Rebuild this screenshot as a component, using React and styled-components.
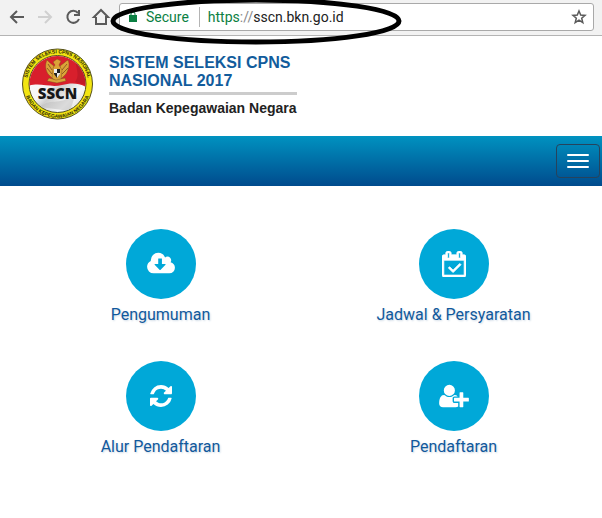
import React from "react";
import styled, { createGlobalStyle } from "styled-components";

const GlobalStyle = createGlobalStyle`
  *, *::before, *::after { box-sizing: border-box; }
  body { margin: 0; background: #fff; font-family: Roboto, sans-serif; }
`;

const Toolbar = styled.div`
  position: relative;
  display: flex;
  align-items: center;
  height: 36px;
  padding: 0 8px 2px 3px;
  background: #f2f2f2;
  border-bottom: 1px solid #b4b4b4;
`;

const ToolButton = styled.button`
  display: flex;
  align-items: center;
  justify-content: center;
  width: 28px;
  height: 28px;
  padding: 0;
  border: 0;
  background: none;
  color: ${(p) => (p.disabled ? "#d0d0d0" : "#5a5a5a")};
`;

const AddressBar = styled.div`
  display: flex;
  flex: 1;
  align-items: center;
  height: 28px;
  margin-left: 4px;
  padding-left: 8px;
  background: #fff;
  border: 1px solid #a9a9a9;
  border-radius: 3px;
  color: #0b8043;
  font-size: 14px;
  line-height: 20px;
`;

const Secure = styled.span`
  margin-left: 8px;
  padding-right: 10px;
`;

const Url = styled.div`
  flex: 1;
  padding-left: 8px;
  border-left: 1px solid #b4b4b4;
`;

const Slashes = styled.span`
  color: #888;
`;

const Host = styled.span`
  color: #222;
`;

const Marker = styled.svg`
  position: absolute;
  z-index: 1;
  top: -5px;
  left: 108px;
  pointer-events: none;
`;

const Brand = styled.header`
  display: flex;
  align-items: flex-start;
  height: 100px;
  padding: 11px 20px 0;
  gap: 14px;
`;

const BrandText = styled.div`
  padding-top: 7px;
  font-family: "Liberation Sans", Arial, sans-serif;
`;

const Title = styled.h1`
  margin: 0;
  padding-bottom: 2px;
  border-bottom: 3px solid #ccc;
  color: #125c9c;
  font-size: 16px;
  line-height: 18px;
`;

const Agency = styled.p`
  margin: 0;
  padding-top: 4px;
  color: #222;
  font-size: 14px;
  font-weight: bold;
  line-height: 18px;
`;

const NavBar = styled.nav`
  display: flex;
  align-items: center;
  justify-content: flex-end;
  height: 50px;
  padding-right: 2px;
  background: linear-gradient(#0092c0, #004b8d);
`;

const MenuButton = styled.button`
  display: flex;
  flex-direction: column;
  align-items: center;
  justify-content: center;
  gap: 4px;
  width: 44px;
  height: 34px;
  padding: 0;
  border: 1px solid #26435c;
  border-radius: 4px;
  background: none;
`;

const MenuLine = styled.span`
  width: 22px;
  height: 2px;
  border-radius: 1px;
  background: #fff;
`;

const Menu = styled.main`
  display: grid;
  grid-template-columns: 1fr 1fr;
  row-gap: 36px;
  padding: 43px 2px 0 14px;
`;

const MenuLink = styled.a`
  display: flex;
  flex-direction: column;
  align-items: center;
  gap: 4px;
  color: #11599c;
  font-size: 16px;
  line-height: 22px;
  text-decoration: none;
  text-shadow: 1px 1px 2px #ccd8e4;
`;

const Label = styled.span`
  padding-top: 1px;
  line-height: 21px;
`;

const Circle = styled.span`
  display: flex;
  align-items: center;
  justify-content: center;
  width: 70px;
  height: 70px;
  border-radius: 50%;
  background: #00a8d8;
  color: #fff;
`;

const items = [
  {
    label: "Pengumuman",
    width: 1920,
    path: "M1280 928q0-14-9-23t-23-9h-224v-352q0-13-9.5-22.5t-22.5-9.5h-192q-13 0-22.5 9.5t-9.5 22.5v352h-224q-13 0-22.5 9.5t-9.5 22.5q0 14 9 23l352 352q9 9 23 9t23-9l351-351q10-12 10-24zm640 224q0 159-112.5 271.5t-271.5 112.5h-1088q-185 0-316.5-131.5t-131.5-316.5q0-130 70-240t188-165q-2-30-2-43 0-212 150-362t362-150q156 0 285.5 87t188.5 231q71-62 166-62 106 0 181 75t75 181q0 76-41 138 130 31 213.5 135.5t83.5 238.5z",
  },
  {
    label: "Jadwal & Persyaratan",
    width: 1664,
    path: "M1303 964l-512 512q-10 9-23 9t-23-9l-288-288q-9-10-9-23t9-22l46-46q9-9 22-9t23 9l220 220 444-444q10-9 23-9t22 9l46 46q9 9 9 22t-9 23zm-1175 700h1408v-1024h-1408v1024zm384-1216v-288q0-14-9-23t-23-9h-64q-14 0-23 9t-9 23v288q0 14 9 23t23 9h64q14 0 23-9t9-23zm768 0v-288q0-14-9-23t-23-9h-64q-14 0-23 9t-9 23v288q0 14 9 23t23 9h64q14 0 23-9t9-23zm384-64v1280q0 52-38 90t-90 38h-1408q-52 0-90-38t-38-90v-1280q0-52 38-90t90-38h128v-96q0-66 47-113t113-47h64q66 0 113 47t47 113v96h384v-96q0-66 47-113t113-47h64q66 0 113 47t47 113v96h128q52 0 90 38t38 90z",
    outline: true,
  },
  {
    label: "Alur Pendaftaran",
    width: 1536,
    path: "M1511 1056q0 5-1 7-64 268-268 434.5t-478 166.5q-146 0-282.5-55t-243.5-157l-129 129q-19 19-45 19t-45-19-19-45v-448q0-26 19-45t45-19h448q26 0 45 19t19 45-19 45l-137 137q71 66 161 102t187 36q134 0 250-65t186-179q11-17 53-117 8-23 30-23h192q13 0 22.5 9.5t9.5 22.5zm25-800v448q0 26-19 45t-45 19h-448q-26 0-45-19t-19-45 19-45l138-138q-148-137-349-137-134 0-250 65t-186 179q-11 17-53 117-8 23-30 23h-199q-13 0-22.5-9.5t-9.5-22.5v-7q65-268 270-434.5t480-166.5q146 0 284 55.5t245 156.5l130-129q19-19 45-19t45 19 19 45z",
  },
  {
    label: "Pendaftaran",
    width: 2048,
    path: "M704 896q-159 0-271.5-112.5t-112.5-271.5 112.5-271.5 271.5-112.5 271.5 112.5 112.5 271.5-112.5 271.5-271.5 112.5zm960 128h352q13 0 22.5 9.5t9.5 22.5v192q0 13-9.5 22.5t-22.5 9.5h-352v352q0 13-9.5 22.5t-22.5 9.5h-192q-13 0-22.5-9.5t-9.5-22.5v-352h-352q-13 0-22.5-9.5t-9.5-22.5v-192q0-13 9.5-22.5t22.5-9.5h352v-352q0-13 9.5-22.5t22.5-9.5h192q13 0 22.5 9.5t9.5 22.5v352zm-736 224q0 52 38 90t90 38h256v238q-68 50-171 50h-874q-121 0-194-69t-73-190q0-53 3.5-103.5t14-109 26.5-108.5 43-97.5 62-81 85.5-53.5 111.5-20q19 0 39 17 79 61 154.5 91.5t164.5 30.5 164.5-30.5 154.5-91.5q20-17 39-17 132 0 217 96h-223q-52 0-90 38t-38 90v192z",
  },
];

function ToolIcon({ d }) {
  return (
    <svg width="20" height="20" viewBox="0 0 20 20" fill="none" stroke="currentColor" strokeWidth="2" aria-hidden="true">
      <path d={d} />
    </svg>
  );
}

function Emblem() {
  return (
    <svg width="75" height="75" viewBox="0 0 75 75" role="img" aria-label="SSCN">
      <defs>
        <clipPath id="disc"><circle cx="37.5" cy="37" r="28" /></clipPath>
        <linearGradient id="cloth" x1="0" y1="0" x2="1" y2="1">
          <stop offset="0" stopColor="#fff" />
          <stop offset="0.45" stopColor="#f4f4f4" />
          <stop offset="0.55" stopColor="#cfcfcf" />
          <stop offset="0.75" stopColor="#fafafa" />
          <stop offset="1" stopColor="#ccc" />
        </linearGradient>
        <path id="upper" d="M7.1 42A30.8 30.8 0 1 1 67.9 42" />
        <path id="lower" d="M4.4 43A33.6 33.6 0 0 0 70.6 43" />
      </defs>
      <circle cx="37.5" cy="37" r="35" fill="#f3e512" stroke="#55501d" />
      <circle cx="37.5" cy="37" r="28.5" fill="url(#cloth)" stroke="#55501d" />
      <g clipPath="url(#disc)">
        <path d="M8 8H68V41C58 35 50 36 42 38C30 41 20 35 8 39Z" fill="#d81f2c" />
        <path d="M58 8C52 18 62 26 55 35L66 38V8Z" fill="#aa1623" opacity="0.5" />
        <path d="M20 60C32 49 41 62 57 43L50 64Z" fill="#bbb" opacity="0.5" />
      </g>
      <g fill="#dba338" stroke="#71441a" strokeWidth="0.4">
        <path d="M34 19C31 17 28 14 27 13C25 17 25 22 28 27L33 32Z" />
        <path d="M40 19C43 17 46 14 48 13C50 17 49 22 46 27L41 32Z" />
        <path d="M37 12L41 14L39 18L42 23L41 32L37 35L32 31L33 21L35 18L33 15Z" />
        <path d="M29 31L36 33L45 31L46 34L37 36L27 34Z" />
      </g>
      <path d="M28 17L32 23M27 21L32 27M47 17L42 23M48 21L42 27" stroke="#7b4921" strokeWidth="0.8" />
      <path d="M34 22H40V27L37 31L34 27Z" fill="#222" />
      <path d="M34 22H37V26H40V27L37 31V26H34Z" fill="#eee" />
      <text x="37.5" y="52" textAnchor="middle" fontFamily="Open Sans" fontSize="15" fontWeight="800" fill="#171717">SSCN</text>
      <g fontFamily="Liberation Sans" fontSize="5" fontWeight="bold" fill="#292509" textAnchor="middle">
        <text><textPath href="#upper" startOffset="50%">SISTEM SELEKSI CPNS NASIONAL</textPath></text>
        <text><textPath href="#lower" startOffset="50%">BADAN KEPEGAWAIAN NEGARA</textPath></text>
      </g>
    </svg>
  );
}

export default function App() {
  return (
    <>
      <GlobalStyle />
      <Toolbar>
        <ToolButton aria-label="Back"><ToolIcon d="M17 10H4M10 4L4 10L10 16" /></ToolButton>
        <ToolButton aria-label="Forward" disabled><ToolIcon d="M3 10H16M10 4L16 10L10 16" /></ToolButton>
        <ToolButton aria-label="Reload"><ToolIcon d="M15 6A6 6 0 1 0 16 12M16 3V8H11" /></ToolButton>
        <ToolButton aria-label="Home"><ToolIcon d="M5 10V17H15V10H17L10 3L3 10H5" /></ToolButton>
        <AddressBar>
          <svg width="10" height="12" viewBox="0 0 10 12" aria-hidden="true">
            <path d="M1 4H9V11H1Z" fill="currentColor" />
            <path d="M3 5V3A2 2 0 0 1 7 3V5" fill="none" stroke="currentColor" />
          </svg>
          <Secure>Secure</Secure>
          <Url>https<Slashes>://</Slashes><Host>sscn.bkn.go.id</Host></Url>
          <ToolButton aria-label="Bookmark">
            <svg width="16" height="16" viewBox="0 0 16 16" fill="none" stroke="currentColor" strokeWidth="1.5" aria-hidden="true">
              <path d="M8 2L9.7 6.1L14 6.4L10.7 9.2L11.8 13.6L8 11.2L4.2 13.6L5.3 9.2L2 6.4L6.3 6.1Z" />
            </svg>
          </ToolButton>
        </AddressBar>
        <Marker width="298" height="52" viewBox="0 0 298 52" aria-hidden="true">
          <ellipse cx="148" cy="26" rx="143" ry="21" fill="none" stroke="#000" strokeWidth="5" />
        </Marker>
      </Toolbar>
      <Brand>
        <Emblem />
        <BrandText>
          <Title>SISTEM SELEKSI CPNS<br />NASIONAL 2017</Title>
          <Agency>Badan Kepegawaian Negara</Agency>
        </BrandText>
      </Brand>
      <NavBar>
        <MenuButton aria-label="Menu"><MenuLine /><MenuLine /><MenuLine /></MenuButton>
      </NavBar>
      <Menu>
        {items.map((item) => (
          <MenuLink key={item.label} href="#">
            <Circle>
              <svg width={Math.round((item.width * 26) / 1792)} height="26" viewBox={`0 0 ${item.width} 1792`} fill="currentColor" stroke={item.outline ? "currentColor" : "none"} strokeWidth="50" aria-hidden="true">
                <path d={item.path} />
              </svg>
            </Circle>
            <Label>{item.label}</Label>
          </MenuLink>
        ))}
      </Menu>
    </>
  );
}
